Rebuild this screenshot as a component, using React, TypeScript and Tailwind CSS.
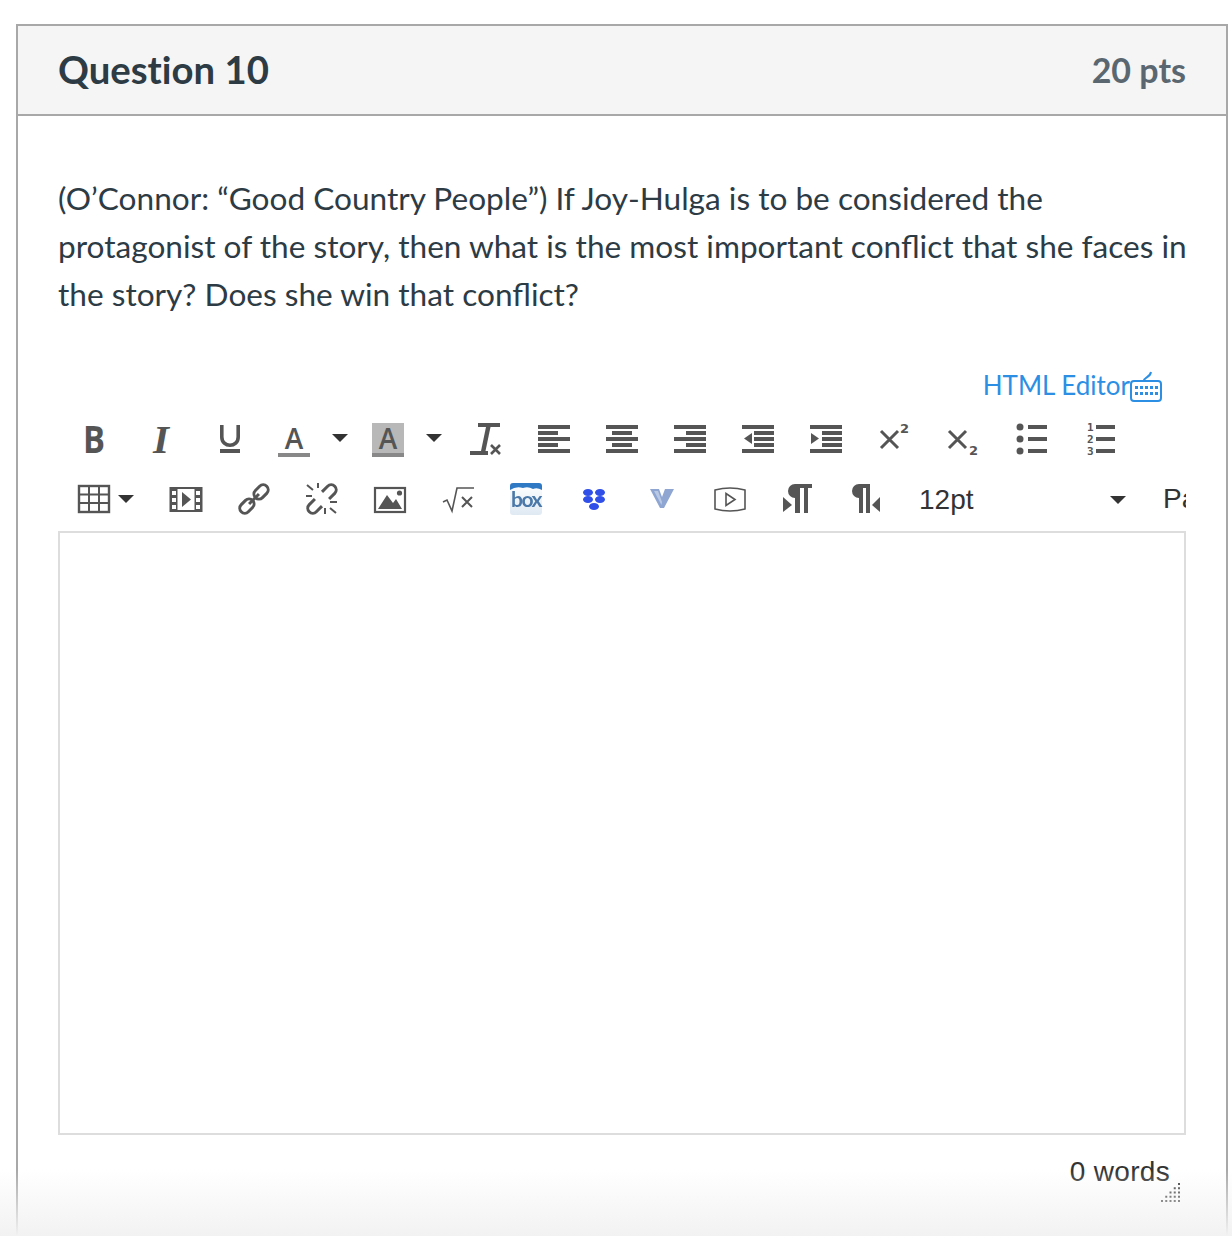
const GREY = "#555555";

const Svg = ({ children, w = 32, className = "" }: { children: React.ReactNode; w?: number; className?: string }) => (
    <svg width={w} height={32} viewBox={`0 0 ${w} 32`} className={`shrink-0 overflow-visible ${className}`}>
        {children}
    </svg>
);

const Caret = () => (
    <svg width={16} height={8} viewBox="0 0 16 8" className="shrink-0">
        <polygon points="0,0 16,0 8,8" fill="#333333" />
    </svg>
);

const Btn = ({ children }: { children: React.ReactNode }) => (
    <div className="flex h-8 w-[68px] shrink-0 items-center justify-center">{children}</div>
);

const SplitBtn = ({ children, width }: { children: React.ReactNode; width: string }) => (
    <div className={`flex h-8 shrink-0 items-center pl-[14px] ${width}`}>{children}</div>
);

const AlignIcon = ({ bars }: { bars: [number, number][] }) => (
    <Svg>
        {bars.map(([x, w], i) => (
            <rect key={i} x={x} y={3 + i * 6} width={w} height={4} fill={GREY} />
        ))}
    </Svg>
);

const IndentIcon = ({ arrow }: { arrow: string }) => (
    <Svg>
        <rect x={0} y={3} width={32} height={4} fill={GREY} />
        <rect x={12} y={9} width={20} height={4} fill={GREY} />
        <rect x={12} y={15} width={20} height={4} fill={GREY} />
        <rect x={12} y={21} width={20} height={4} fill={GREY} />
        <rect x={0} y={27} width={32} height={4} fill={GREY} />
        <polygon points={arrow} fill={GREY} />
    </Svg>
);

const ColorA = ({ filled }: { filled?: boolean }) => (
    <Svg>
        {filled && <rect x={0} y={1} width={32} height={30} fill="#b8b8b8" />}
        <text x={16} y={27} textAnchor="middle" fontSize={28} fontWeight={600} fill={GREY} fontFamily="'Open Sans', sans-serif">A</text>
        <rect x={0} y={31} width={32} height={4} fill="#888888" />
    </Svg>
);

const Cross = ({ x, y, s, sw = 2.6 }: { x: number; y: number; s: number; sw?: number }) => (
    <path d={`M${x} ${y}L${x + s} ${y + s}M${x + s} ${y}L${x} ${y + s}`} stroke={GREY} strokeWidth={sw} fill="none" />
);

const FormatRow = () => (
    <div className="flex h-[60px] items-center pl-[2px]">
        <Btn>
            <Svg>
                <text x={16} y={31} textAnchor="middle" fontSize={38} fontWeight={700} fill={GREY} fontFamily="'Open Sans', sans-serif" textLength={22} lengthAdjust="spacingAndGlyphs">B</text>
            </Svg>
        </Btn>
        <Btn>
            <Svg>
                <text x={15} y={31} textAnchor="middle" fontSize={41} fontWeight={700} fontStyle="italic" fill={GREY} fontFamily="'Liberation Serif', serif">I</text>
            </Svg>
        </Btn>
        <Btn>
            <Svg>
                <path d="M7.8 3V15C7.8 26 24.2 26 24.2 15V3" fill="none" stroke={GREY} strokeWidth={3.6} />
                <rect x={6} y={27} width={20} height={4} fill={GREY} />
            </Svg>
        </Btn>
        <SplitBtn width="w-[94px]">
            <ColorA />
            <span className="w-[22px]" />
            <Caret />
        </SplitBtn>
        <SplitBtn width="w-[94px]">
            <ColorA filled />
            <span className="w-[22px]" />
            <Caret />
        </SplitBtn>
        <Btn>
            <Svg>
                <rect x={8} y={1} width={22} height={4} fill={GREY} />
                <polygon points="16,5 20.5,5 15.5,29 11,29" fill={GREY} />
                <rect x={0} y={29} width={18} height={4} fill={GREY} />
                <Cross x={21} y={23} s={9} />
            </Svg>
        </Btn>
        <Btn><AlignIcon bars={[[0, 32], [0, 20], [0, 32], [0, 20], [0, 32]]} /></Btn>
        <Btn><AlignIcon bars={[[0, 32], [6, 20], [0, 32], [6, 20], [0, 32]]} /></Btn>
        <Btn><AlignIcon bars={[[0, 32], [12, 20], [0, 32], [12, 20], [0, 32]]} /></Btn>
        <Btn><IndentIcon arrow="10,11 10,22 2,16.5" /></Btn>
        <Btn><IndentIcon arrow="1,11 1,22 9,16.5" /></Btn>
        <Btn>
            <Svg>
                <Cross x={3} y={9} s={17} sw={3} />
                <text x={22} y={11} fontSize={13} fontWeight={700} fill={GREY} fontFamily="'DejaVu Sans', sans-serif">2</text>
            </Svg>
        </Btn>
        <Btn>
            <Svg>
                <Cross x={3} y={9} s={17} sw={3} />
                <text x={23} y={33} fontSize={13} fontWeight={700} fill={GREY} fontFamily="'DejaVu Sans', sans-serif">2</text>
            </Svg>
        </Btn>
        <Btn>
            <Svg>
                {[5, 17, 29].map((y) => (
                    <g key={y}>
                        <circle cx={6} cy={y} r={3.5} fill={GREY} />
                        <rect x={14} y={y - 2} width={19} height={4} fill={GREY} />
                    </g>
                ))}
            </Svg>
        </Btn>
        <Btn>
            <Svg>
                {[
                    ["1", 5],
                    ["2", 17],
                    ["3", 29],
                ].map(([n, y]) => (
                    <g key={n}>
                        <text x={5} y={Number(y) + 4} fontSize={11} fontWeight={700} fill={GREY} fontFamily="'DejaVu Sans Mono', monospace">{n}</text>
                        <rect x={14} y={Number(y) - 2} width={19} height={4} fill={GREY} />
                    </g>
                ))}
            </Svg>
        </Btn>
    </div>
);

const InsertRow = () => (
    <div className="flex h-[62px] items-center overflow-hidden pl-[2px]">
        <SplitBtn width="w-[92px] pl-[18px]">
            <Svg>
                <g fill="none" stroke={GREY} strokeWidth={2}>
                    <rect x={1} y={3} width={30} height={26} strokeWidth={2.4} />
                    <path d="M1 11.5H31M1 20H31M11 3V29M21 3V29" />
                </g>
            </Svg>
            <span className="w-2" />
            <Caret />
        </SplitBtn>
        <Btn>
            <Svg>
                <rect x={0.5} y={5} width={31} height={23} fill="#ffffff" stroke={GREY} strokeWidth={2} />
                <rect x={1} y={5} width={6} height={23} fill={GREY} />
                <rect x={25} y={5} width={6} height={23} fill={GREY} />
                <path d="M7 5V28M25 5V28" stroke={GREY} strokeWidth={1} />
                {[8, 15, 22].map((y) => (
                    <g key={y} fill="#ffffff">
                        <rect x={2} y={y} width={4} height={4} />
                        <rect x={26} y={y} width={4} height={4} />
                    </g>
                ))}
                <polygon points="12,9 21,16.5 12,24" fill={GREY} />
            </Svg>
        </Btn>
        <Btn>
            <Svg>
                <g fill="none" stroke={GREY} strokeWidth={3} transform="rotate(-45 16 16)">
                    <rect x={-2} y={11} width={16} height={10} rx={5} />
                    <rect x={18} y={11} width={16} height={10} rx={5} />
                    <path d="M9 16H23" />
                </g>
            </Svg>
        </Btn>
        <Btn>
            <Svg>
                <g fill="none" stroke={GREY} strokeWidth={3} transform="rotate(-45 16 16)">
                    <path d="M11 11H3A5 5 0 0 0 3 21H11" />
                    <path d="M21 11H29A5 5 0 0 1 29 21H21" />
                </g>
                <path d="M1 2L7 7M12 0V5M0 13H6M24 19H31M19 25V31M24 25L30 30" stroke={GREY} strokeWidth={2} fill="none" />
            </Svg>
        </Btn>
        <Btn>
            <Svg>
                <rect x={1} y={5} width={30} height={24} fill="none" stroke={GREY} strokeWidth={2.2} />
                <polygon points="4,26 13,12 19,20 22,16 28,26" fill={GREY} />
                <circle cx={25.5} cy={10} r={2.6} fill={GREY} />
            </Svg>
        </Btn>
        <Btn>
            <Svg>
                <path d="M1 19L5 17L10 28L15 5H32" fill="none" stroke={GREY} strokeWidth={1.6} />
                <Cross x={20} y={14} s={10} sw={2} />
            </Svg>
        </Btn>
        <Btn>
            <Svg className="[filter:blur(0.5px)]">
                <defs>
                    <linearGradient id="boxTile" x1="0" y1="0" x2="0" y2="1">
                        <stop offset="0" stopColor="#ffffff" />
                        <stop offset="1" stopColor="#dfe9f2" />
                    </linearGradient>
                </defs>
                <rect x={0} y={0} width={32} height={32} rx={3} fill="url(#boxTile)" />
                <path d="M0 3A3 3 0 0 1 3 0H29A3 3 0 0 1 32 3V7Q27 4 23 6Q18 3 13 5Q6 3 0 7Z" fill="#2f78c4" />
                <text x={16} y={24} textAnchor="middle" fontSize={21} fontWeight={700} fill="#4a78a8" letterSpacing={-1.5} fontFamily="Lato, sans-serif">box</text>
            </Svg>
        </Btn>
        <Btn>
            <Svg className="[filter:blur(0.6px)]">
                <g fill="#2f4fe8">
                    <ellipse cx={10} cy={9.5} rx={5} ry={3.5} />
                    <ellipse cx={22} cy={9.5} rx={5} ry={3.5} />
                    <ellipse cx={10} cy={16.5} rx={5} ry={3.5} />
                    <ellipse cx={22} cy={16.5} rx={5} ry={3.5} />
                    <ellipse cx={16} cy={23.5} rx={5} ry={3.5} />
                </g>
            </Svg>
        </Btn>
        <Btn>
            <Svg className="[filter:blur(0.5px)]">
                <polygon points="4,6 13,6 16,14 19,6 28,6 18,25 14,25" fill="#8fa6d3" />
                <polygon points="8,8 12,8 16,19 15.5,22" fill="#b9c9e4" />
            </Svg>
        </Btn>
        <Btn>
            <Svg>
                <path d="M1 7Q16 3 31 7V26Q16 30 1 26Z" fill="none" stroke={GREY} strokeWidth={1.6} />
                <polygon points="12,10.5 21,16.5 12,22.5" fill="none" stroke={GREY} strokeWidth={1.6} />
            </Svg>
        </Btn>
        <Btn>
            <Svg>
                <path d="M30 1H13A7 7 0 0 0 13 15V30H18V5H22V30H26V5H30Z" fill={GREY} />
                <polygon points="1,14 10,22 1,29" fill={GREY} />
            </Svg>
        </Btn>
        <Btn>
            <Svg>
                <path d="M20 1H9A7 7 0 0 0 9 15V30H13V5H16V30H20Z" fill={GREY} />
                <polygon points="30,14 22,22 30,29" fill={GREY} />
            </Svg>
        </Btn>
        <div className="flex w-[244px] shrink-0 items-center justify-between pl-[19px] pr-[18px] pt-[1px]">
            <span className="text-[28px] leading-8 text-[#333333] [font-family:'Liberation_Sans',sans-serif]">12pt</span>
            <Caret />
        </div>
        <span className="pl-[19px] text-[28px] leading-8 whitespace-nowrap text-[#333333] [font-family:'Liberation_Sans',sans-serif]">Paragraph</span>
    </div>
);

const KeyboardIcon = () => (
    <svg width={32} height={32} viewBox="0 0 32 32" className="shrink-0 translate-y-[3px]">
        <rect x={1} y={10} width={30} height={20} rx={3} fill="none" stroke="#2d8fe3" strokeWidth={2} />
        <path d="M14 10C14 6 20 7 21 1" fill="none" stroke="#2d8fe3" strokeWidth={2} />
        <g fill="#2d8fe3">
            {[5, 10, 15, 20, 25].map((x) => (
                <rect key={x} x={x} y={15} width={3} height={3} />
            ))}
            {[5, 10, 15, 20, 25].map((x) => (
                <rect key={x} x={x} y={21} width={3} height={3} />
            ))}
        </g>
    </svg>
);

const ResizeGrip = () => (
    <svg width={20} height={20} viewBox="0 0 20 20" className="absolute right-[5px] top-[48px]">
        {[0, 1, 2, 3, 4].map((row) =>
            [0, 1, 2, 3, 4].filter((col) => col + row >= 4).map((col) => (
                <rect key={`${row}-${col}`} x={col * 4.25} y={row * 4.25} width={2} height={2} fill="#333333" />
            ))
        )}
    </svg>
);

const App = () => {
    return (
        <div className="relative h-[1236px] overflow-hidden bg-white pl-4 pr-1 pt-6 [font-family:Lato,sans-serif]">
            <div className="border-2 border-b-0 border-[#a8a8a8]">
                <header className="flex h-[90px] items-center justify-between border-b-2 border-[#a8a8a8] bg-[#f5f5f5] pb-[2px] pl-10 pr-10">
                    <h1 className="text-[38.3px] font-bold leading-none text-[#2d3b45] [font-variant-ligatures:none]">Question 10</h1>
                    <span className="pt-[2px] text-[34px] font-bold leading-none text-[#5b6770]">20 pts</span>
                </header>
                <div className="px-10 pt-[58px]">
                    <p className="-mr-2 text-[31.6px] leading-[48px] text-[#2d3b45]">
                        (O’Connor: “Good Country People”) If Joy-Hulga is to be considered the protagonist of the story, then what is the most important conflict that she faces in the story? Does she win that conflict?
                    </p>
                    <div className="mb-[7px] mt-[49px] flex h-[34px] items-center justify-end pr-6">
                        <span className="pt-[1px] text-[26px] leading-none text-[#2d8fe3]">HTML Editor</span>
                        <KeyboardIcon />
                    </div>
                    <FormatRow />
                    <InsertRow />
                    <div className="mt-[1px] h-[604px] border-2 border-[#dddddd]" />
                    <div className="relative h-[100px]">
                        <div className="pr-4 pt-[21px] text-right text-[28px] leading-8 tracking-[0.3px] text-[#333333] [font-family:'Liberation_Sans',sans-serif]">0 words</div>
                        <ResizeGrip />
                    </div>
                </div>
            </div>
            <div className="pointer-events-none absolute inset-x-0 bottom-0 h-[66px] bg-gradient-to-b from-white/0 to-[#f2f2f2]" />
        </div>
    );
};

export default App;
